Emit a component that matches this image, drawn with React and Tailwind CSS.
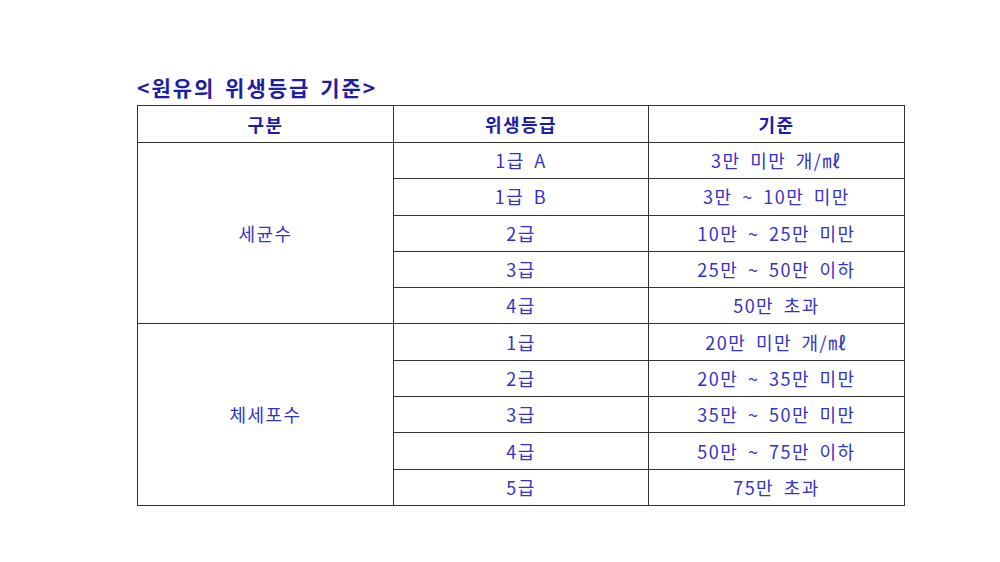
import React from 'react';

const rows = [
  { group: '세균수', span: 5, grade: '1급 A', std: '3만 미만 개/㎖' },
  { grade: '1급 B', std: '3만 ~ 10만 미만' },
  { grade: '2급', std: '10만 ~ 25만 미만' },
  { grade: '3급', std: '25만 ~ 50만 이하' },
  { grade: '4급', std: '50만 초과' },
  { group: '체세포수', span: 5, grade: '1급', std: '20만 미만 개/㎖' },
  { grade: '2급', std: '20만 ~ 35만 미만' },
  { grade: '3급', std: '35만 ~ 50만 미만' },
  { grade: '4급', std: '50만 ~ 75만 이하' },
  { grade: '5급', std: '75만 초과' },
];

function App() {
  const font = { fontFamily: '"Noto Sans CJK KR", "Noto Sans", sans-serif' };
  return (
    <div className="w-[1000px] h-[562px] bg-white overflow-hidden" style={font}>
      <div className="pl-[137px] pt-[72px]">
        <h2 className="h-[30px] text-[21px] leading-[30px] font-bold text-[#1c1ca8] tracking-[2px] [word-spacing:3px]">
          &lt;원유의 위생등급 기준&gt;
        </h2>
        <table className="w-[767px] h-[401px] border-collapse table-fixed text-[18px] text-[#3434c4] tracking-[1.5px] [word-spacing:4px] mt-[3px]">
          <colgroup>
            <col className="w-[256px]" />
            <col className="w-[255px]" />
            <col className="w-[256px]" />
          </colgroup>
          <thead>
            <tr className="h-[37px]">
              <th className="border border-[#333] font-bold text-[#1c1ca8]">구분</th>
              <th className="border border-[#333] font-bold text-[#1c1ca8]">위생등급</th>
              <th className="border border-[#333] font-bold text-[#1c1ca8]">기준</th>
            </tr>
          </thead>
          <tbody>
            {rows.map((r, i) => (
              <tr key={i} className="h-[36px]">
                {r.group && (
                  <td rowSpan={r.span} className="border border-[#333] text-center font-normal">
                    {r.group}
                  </td>
                )}
                <td className="border border-[#333] text-center">{r.grade}</td>
                <td className="border border-[#333] text-center">{r.std}</td>
              </tr>
            ))}
          </tbody>
        </table>
      </div>
    </div>
  );
}

export default App;
